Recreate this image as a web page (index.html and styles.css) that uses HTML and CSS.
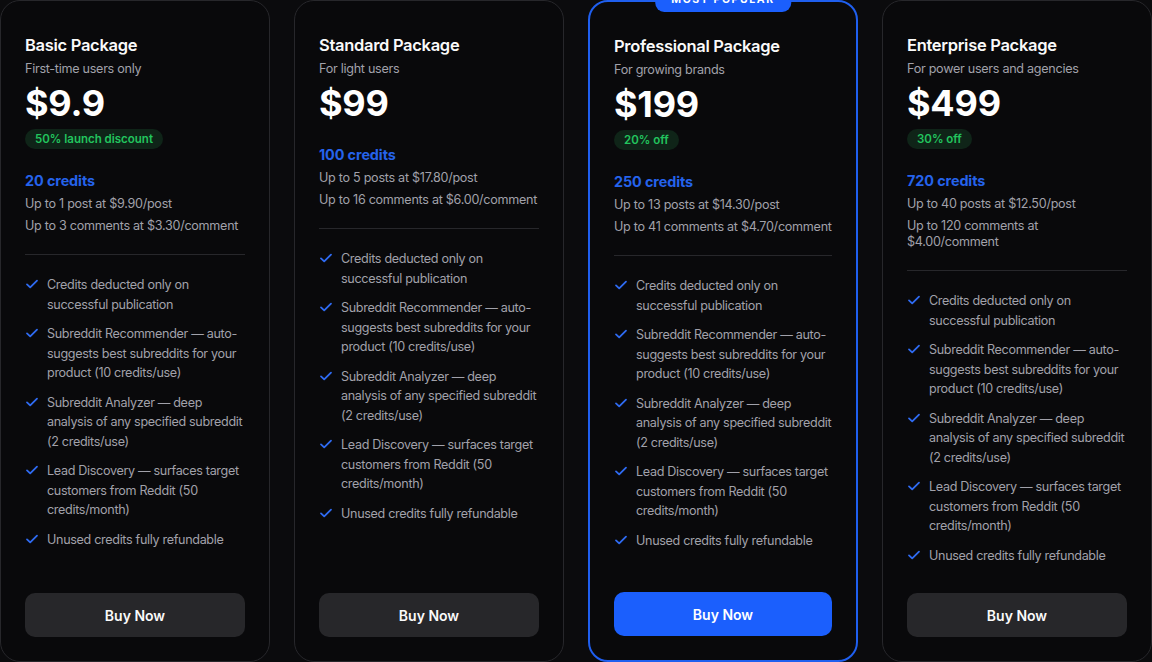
FILE: index.html
```html
<!DOCTYPE html>
<html lang="en">
<head>
<meta charset="utf-8">
<title>Pricing</title>
<link rel="stylesheet" href="styles.css">
</head>
<body>
<main class="plans">
  <section class="card">
    <h2 class="title">Basic Package</h2>
    <p class="sub">First-time users only</p>
    <div class="price">$9.9</div>
    <span class="badge">50% launch discount</span>
    <div class="credits">
      <div class="credits-amount">20 credits</div>
      <p class="detail">Up to 1 post at $9.90/post</p>
      <p class="detail">Up to 3 comments at $3.30/comment</p>
    </div>
    <hr class="divider">
    <ul class="features">
      <li><svg class="check" viewBox="0 0 14 14"><path d="M2 7.4l3.2 3L12 3.6"/></svg><span>Credits deducted only on successful publication</span></li>
      <li><svg class="check" viewBox="0 0 14 14"><path d="M2 7.4l3.2 3L12 3.6"/></svg><span>Subreddit Recommender — auto-suggests best subreddits for your product (10 credits/use)</span></li>
      <li><svg class="check" viewBox="0 0 14 14"><path d="M2 7.4l3.2 3L12 3.6"/></svg><span>Subreddit Analyzer — deep analysis of any specified subreddit (2 credits/use)</span></li>
      <li><svg class="check" viewBox="0 0 14 14"><path d="M2 7.4l3.2 3L12 3.6"/></svg><span>Lead Discovery — surfaces target customers from Reddit (50 credits/month)</span></li>
      <li><svg class="check" viewBox="0 0 14 14"><path d="M2 7.4l3.2 3L12 3.6"/></svg><span>Unused credits fully refundable</span></li>
    </ul>
    <button class="buy">Buy Now</button>
  </section>

  <section class="card">
    <h2 class="title">Standard Package</h2>
    <p class="sub">For light users</p>
    <div class="price">$99</div>
    <div class="credits">
      <div class="credits-amount">100 credits</div>
      <p class="detail">Up to 5 posts at $17.80/post</p>
      <p class="detail">Up to 16 comments at $6.00/comment</p>
    </div>
    <hr class="divider">
    <ul class="features">
      <li><svg class="check" viewBox="0 0 14 14"><path d="M2 7.4l3.2 3L12 3.6"/></svg><span>Credits deducted only on successful publication</span></li>
      <li><svg class="check" viewBox="0 0 14 14"><path d="M2 7.4l3.2 3L12 3.6"/></svg><span>Subreddit Recommender — auto-suggests best subreddits for your product (10 credits/use)</span></li>
      <li><svg class="check" viewBox="0 0 14 14"><path d="M2 7.4l3.2 3L12 3.6"/></svg><span>Subreddit Analyzer — deep analysis of any specified subreddit (2 credits/use)</span></li>
      <li><svg class="check" viewBox="0 0 14 14"><path d="M2 7.4l3.2 3L12 3.6"/></svg><span>Lead Discovery — surfaces target customers from Reddit (50 credits/month)</span></li>
      <li><svg class="check" viewBox="0 0 14 14"><path d="M2 7.4l3.2 3L12 3.6"/></svg><span>Unused credits fully refundable</span></li>
    </ul>
    <button class="buy">Buy Now</button>
  </section>

  <section class="card card-popular">
    <span class="popular">Most Popular</span>
    <h2 class="title">Professional Package</h2>
    <p class="sub">For growing brands</p>
    <div class="price">$199</div>
    <span class="badge">20% off</span>
    <div class="credits">
      <div class="credits-amount">250 credits</div>
      <p class="detail">Up to 13 posts at $14.30/post</p>
      <p class="detail">Up to 41 comments at $4.70/comment</p>
    </div>
    <hr class="divider">
    <ul class="features">
      <li><svg class="check" viewBox="0 0 14 14"><path d="M2 7.4l3.2 3L12 3.6"/></svg><span>Credits deducted only on successful publication</span></li>
      <li><svg class="check" viewBox="0 0 14 14"><path d="M2 7.4l3.2 3L12 3.6"/></svg><span>Subreddit Recommender — auto-suggests best subreddits for your product (10 credits/use)</span></li>
      <li><svg class="check" viewBox="0 0 14 14"><path d="M2 7.4l3.2 3L12 3.6"/></svg><span>Subreddit Analyzer — deep analysis of any specified subreddit (2 credits/use)</span></li>
      <li><svg class="check" viewBox="0 0 14 14"><path d="M2 7.4l3.2 3L12 3.6"/></svg><span>Lead Discovery — surfaces target customers from Reddit (50 credits/month)</span></li>
      <li><svg class="check" viewBox="0 0 14 14"><path d="M2 7.4l3.2 3L12 3.6"/></svg><span>Unused credits fully refundable</span></li>
    </ul>
    <button class="buy buy-primary">Buy Now</button>
  </section>

  <section class="card">
    <h2 class="title">Enterprise Package</h2>
    <p class="sub">For power users and agencies</p>
    <div class="price">$499</div>
    <span class="badge">30% off</span>
    <div class="credits">
      <div class="credits-amount">720 credits</div>
      <p class="detail">Up to 40 posts at $12.50/post</p>
      <p class="detail">Up to 120 comments at $4.00/comment</p>
    </div>
    <hr class="divider">
    <ul class="features">
      <li><svg class="check" viewBox="0 0 14 14"><path d="M2 7.4l3.2 3L12 3.6"/></svg><span>Credits deducted only on successful publication</span></li>
      <li><svg class="check" viewBox="0 0 14 14"><path d="M2 7.4l3.2 3L12 3.6"/></svg><span>Subreddit Recommender — auto-suggests best subreddits for your product (10 credits/use)</span></li>
      <li><svg class="check" viewBox="0 0 14 14"><path d="M2 7.4l3.2 3L12 3.6"/></svg><span>Subreddit Analyzer — deep analysis of any specified subreddit (2 credits/use)</span></li>
      <li><svg class="check" viewBox="0 0 14 14"><path d="M2 7.4l3.2 3L12 3.6"/></svg><span>Lead Discovery — surfaces target customers from Reddit (50 credits/month)</span></li>
      <li><svg class="check" viewBox="0 0 14 14"><path d="M2 7.4l3.2 3L12 3.6"/></svg><span>Unused credits fully refundable</span></li>
    </ul>
    <button class="buy">Buy Now</button>
  </section>
</main>
</body>
</html>
```

FILE: styles.css
```css
* { box-sizing: border-box; }

html, body {
  margin: 0;
  padding: 0;
  background: #0b0b0d;
  height: 100%;
  overflow: hidden;
}

body {
  font-family: Inter, "Noto Sans", "Liberation Sans", sans-serif;
  color: #fafafa;
}

.plans {
  display: grid;
  grid-template-columns: repeat(4, 1fr);
  gap: 24px;
  height: 662px;
}

.card {
  position: relative;
  display: flex;
  flex-direction: column;
  align-items: flex-start;
  background: #09090b;
  border: 1px solid #27272b;
  border-radius: 20px;
  padding: 32px 24px 24px;
}

.card-popular {
  border: 2px solid #1f5fef;
}

.popular {
  position: absolute;
  top: -14px;
  left: 50%;
  transform: translateX(-50%);
  height: 24px;
  line-height: 24px;
  padding: 0 16px;
  background: #1b5ffd;
  border-radius: 9px;
  font-size: 10.5px;
  font-weight: 700;
  letter-spacing: 1.6px;
  text-transform: uppercase;
  color: #fff;
  white-space: nowrap;
}

.title {
  margin: 0;
  font-size: 16.5px;
  line-height: 24px;
  font-weight: 600;
  letter-spacing: -0.3px;
  color: #fafafa;
}

.sub {
  margin: 3px 0 0;
  font-size: 12.6px;
  line-height: 18px;
  letter-spacing: -0.28px;
  color: #a1a1aa;
}

.price {
  margin-top: 5px;
  font-size: 36px;
  line-height: 40px;
  font-weight: 700;
  letter-spacing: -0.2px;
  color: #fff;
}

.badge {
  margin-top: 6px;
  height: 20px;
  line-height: 20px;
  padding: 0 10px;
  border-radius: 10px;
  background: #0f2418;
  color: #22c55e;
  font-size: 11.5px;
  font-weight: 600;
}

.credits {
  margin-top: 23px;
}

.credits-amount {
  font-size: 14.4px;
  line-height: 18px;
  font-weight: 700;
  letter-spacing: -0.1px;
  color: #2563eb;
}

.detail {
  margin: 6px 0 0;
  font-size: 12.6px;
  line-height: 16px;
  letter-spacing: -0.28px;
  color: #a1a1aa;
}

.divider {
  align-self: stretch;
  margin: 20px 0 0;
  border: 0;
  border-top: 1px solid #27272b;
}

.features {
  list-style: none;
  margin: 20px 0 0;
  padding: 0;
  display: flex;
  flex-direction: column;
  gap: 10px;
}

.features li {
  display: flex;
  align-items: flex-start;
  gap: 8px;
  font-size: 12.6px;
  line-height: 19.5px;
  letter-spacing: -0.33px;
  color: #a1a1aa;
}

.check {
  flex: none;
  width: 14px;
  height: 14px;
  margin-top: 2px;
  fill: none;
  stroke: #2f6bf2;
  stroke-width: 1.8;
  stroke-linecap: round;
  stroke-linejoin: round;
}

.buy {
  margin-top: auto;
  align-self: stretch;
  height: 44px;
  border: 0;
  border-radius: 10px;
  background: #27272a;
  color: #fafafa;
  font-family: inherit;
  font-size: 14px;
  font-weight: 600;
  cursor: pointer;
}

.buy-primary {
  background: #1b5ffd;
  color: #fff;
}
```
